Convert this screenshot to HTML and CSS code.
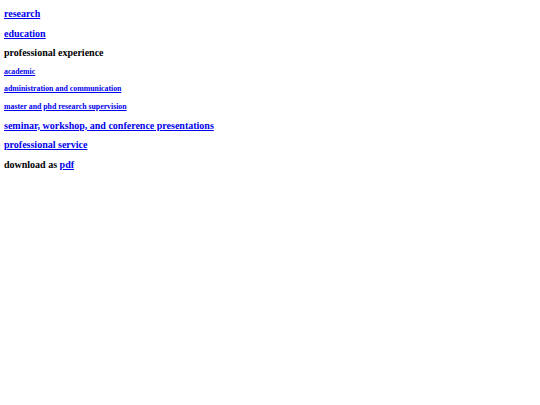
FILE: index.html
```html
<!DOCTYPE html>
<html>
<head>
<meta charset="utf-8">
<link rel="stylesheet" href="styles.css">
</head>
<body>
<div class="nav">
<h3 class="sec"><a href="#">research</a></h3>
<h3 class="sec"><a href="#">education</a></h3>
<h3 class="sec">professional experience</h3>
<h5 class="sub"><a href="#">academic</a></h5>
<h5 class="sub"><a href="#">administration and communication</a></h5>
<h5 class="sub"><a href="#">master and phd research supervision</a></h5>
<h3 class="sec"><a href="#">seminar, workshop, and conference presentations</a></h3>
<h3 class="sec"><a href="#">professional service</a></h3>
<h3 class="sec">download as <a href="#">pdf</a></h3>
</div>
</body>
</html>
```
FILE: styles.css
```css
body {
  margin: 0;
  padding: 8px 4px;
  font-family: "Liberation Serif", "Times New Roman", serif;
  color: #000;
}
.nav {
  display: flex;
  flex-direction: column;
  align-items: flex-start;
  gap: 8.6px;
}
.sec {
  font-size: 10px;
  margin: 0;
}
.sub {
  font-size: 7.8px;
  margin: 0;
}
a {
  color: #0000ee;
}
```
